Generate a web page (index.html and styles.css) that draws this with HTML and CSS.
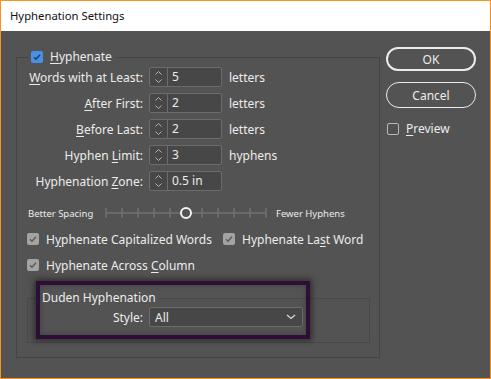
FILE: index.html
```html
<!DOCTYPE html>
<html lang="en">
<head>
<meta charset="UTF-8">
<title>Hyphenation Settings</title>
<link rel="stylesheet" href="styles.css">
</head>
<body>
    <div class="window">
        <div class="titlebar">Hyphenation Settings</div>

        <div class="content">
            <!-- Main group -->
            <fieldset class="group">
                <legend class="legend">
                    <span class="check blue"><svg width="12" height="12" viewBox="0 0 12 12"><path d="M3 6.2 L5 8.2 L9 3.8" fill="none" stroke="#233d5e" stroke-width="1.6"/></svg></span>
                    <span><u>H</u>yphenate</span>
                </legend>

                <div class="rows">
                    <label class="lbl"><u>W</u>ords with at Least:</label>
                    <div class="spin"><span class="arrows"><svg width="17" height="18" viewBox="0 0 17 18"><path d="M5.5 6.5 L8.5 3.5 L11.5 6.5 M5.5 11.5 L8.5 14.5 L11.5 11.5" fill="none" stroke="#b4b4b4" stroke-width="1"/></svg></span><span class="val">5</span></div>
                    <span class="unit">letters</span>

                    <label class="lbl"><u>A</u>fter First:</label>
                    <div class="spin"><span class="arrows"><svg width="17" height="18" viewBox="0 0 17 18"><path d="M5.5 6.5 L8.5 3.5 L11.5 6.5 M5.5 11.5 L8.5 14.5 L11.5 11.5" fill="none" stroke="#b4b4b4" stroke-width="1"/></svg></span><span class="val">2</span></div>
                    <span class="unit">letters</span>

                    <label class="lbl"><u>B</u>efore Last:</label>
                    <div class="spin"><span class="arrows"><svg width="17" height="18" viewBox="0 0 17 18"><path d="M5.5 6.5 L8.5 3.5 L11.5 6.5 M5.5 11.5 L8.5 14.5 L11.5 11.5" fill="none" stroke="#b4b4b4" stroke-width="1"/></svg></span><span class="val">2</span></div>
                    <span class="unit">letters</span>

                    <label class="lbl">Hyphen <u>L</u>imit:</label>
                    <div class="spin"><span class="arrows"><svg width="17" height="18" viewBox="0 0 17 18"><path d="M5.5 6.5 L8.5 3.5 L11.5 6.5 M5.5 11.5 L8.5 14.5 L11.5 11.5" fill="none" stroke="#b4b4b4" stroke-width="1"/></svg></span><span class="val">3</span></div>
                    <span class="unit">hyphens</span>

                    <label class="lbl">Hyphenation <u>Z</u>one:</label>
                    <div class="spin"><span class="arrows"><svg width="17" height="18" viewBox="0 0 17 18"><path d="M5.5 6.5 L8.5 3.5 L11.5 6.5 M5.5 11.5 L8.5 14.5 L11.5 11.5" fill="none" stroke="#b4b4b4" stroke-width="1"/></svg></span><span class="val">0.5 in</span></div>
                    <span class="unit"></span>
                </div>

                <!-- Spacing slider -->
                <div class="slider">
                    <span class="slider-lbl">Better Spacing</span>
                    <div class="track"><span class="thumb"></span></div>
                    <span class="slider-lbl">Fewer Hyphens</span>
                </div>

                <div class="checks">
                    <div class="opt"><span class="check grey"><svg width="12" height="12" viewBox="0 0 12 12"><path d="M3 6.2 L5 8.2 L9 3.8" fill="none" stroke="#5c5c5c" stroke-width="1.5"/></svg></span><span>H<u>y</u>phenate Capitalized Words</span></div>
                    <div class="opt"><span class="check grey"><svg width="12" height="12" viewBox="0 0 12 12"><path d="M3 6.2 L5 8.2 L9 3.8" fill="none" stroke="#5c5c5c" stroke-width="1.5"/></svg></span><span>Hyphenate La<u>s</u>t Word</span></div>
                    <div class="opt"><span class="check grey"><svg width="12" height="12" viewBox="0 0 12 12"><path d="M3 6.2 L5 8.2 L9 3.8" fill="none" stroke="#5c5c5c" stroke-width="1.5"/></svg></span><span>Hyphenate Across <u>C</u>olumn</span></div>
                </div>

                <!-- Duden group -->
                <fieldset class="duden">
                    <legend class="legend2">Duden Hyphenation</legend>
                    <div class="style-row">
                        <label class="lbl">Style:</label>
                        <div class="select">
                            <span>All</span>
                            <svg width="10" height="6" viewBox="0 0 10 6"><path d="M1 1 L5 4.5 L9 1" fill="none" stroke="#d8d8d8" stroke-width="1.3"/></svg>
                        </div>
                    </div>
                    <div class="highlight"></div>
                </fieldset>
            </fieldset>

            <!-- Buttons -->
            <div class="side">
                <button class="btn primary">OK</button>
                <button class="btn">Cancel</button>
                <div class="preview"><span class="check empty"></span><span><u>P</u>review</span></div>
            </div>
        </div>
    </div>
</body>
</html>
```

FILE: styles.css
```css
* {
    box-sizing: border-box;
}

html, body {
    margin: 0;
    padding: 0;
}

body {
    width: 491px;
    height: 379px;
    background: #535353;
    font-family: "Noto Sans", "Open Sans", sans-serif;
    font-size: 12px;
    color: #ececec;
}

u {
    text-decoration: underline;
    text-underline-offset: 2px;
}

.window {
    height: 379px;
    border: 1px solid #f7931e;
    background: #535353;
}

.titlebar {
    height: 30px;
    line-height: 30px;
    padding-left: 9px;
    background: #fff;
    color: #111;
    font-size: 11.3px;
}

.content {
    display: flex;
    gap: 6px;
    padding: 16px 0 0 15px;
}

/* Group boxes */
.group {
    position: relative;
    margin: 3px 0 0 0;
    padding: 0;
    width: 364px;
    height: 308px;
    border: 1px solid #454545;
}

.legend {
    margin-left: 11px;
    padding: 0 4px 0 3px;
    height: 14px;
    display: flex;
    align-items: center;
    gap: 7px;
    line-height: 14px;
}

.check {
    display: inline-block;
    width: 12px;
    height: 12px;
    border-radius: 2px;
    flex: none;
}

.check svg {
    display: block;
}

.check.blue {
    background: #4a8fe6;
}

.check.grey {
    background: #a3a3a3;
}

.check.empty {
    border: 1px solid #b8b8b8;
    background: #505050;
}

/* Spinner rows */
.rows {
    display: grid;
    grid-template-columns: 126px 73px auto;
    grid-auto-rows: 20px;
    column-gap: 6px;
    row-gap: 6px;
    margin-top: 3px;
    align-items: center;
}

.lbl {
    text-align: right;
    white-space: nowrap;
}

.unit {
    padding-left: 1px;
}

.spin {
    display: flex;
    height: 20px;
    border: 1px solid #6b6b6b;
    border-radius: 2px;
    background: #474747;
}

.spin .arrows {
    width: 18px;
    border-right: 1px solid #6b6b6b;
}

.spin .arrows svg {
    display: block;
}

.spin .val {
    padding-left: 4px;
    line-height: 18px;
}

/* Slider */
.slider {
    display: flex;
    align-items: center;
    height: 14px;
    margin-top: 15px;
    padding-left: 11px;
}

.slider-lbl {
    font-size: 9.5px;
    white-space: nowrap;
}

.slider-lbl:first-child {
    width: 77px;
}

.track {
    position: relative;
    width: 162px;
    height: 10px;
    margin-right: 9px;
    background:
        linear-gradient(#6a6a6a, #6a6a6a) 0 4px / 100% 2px no-repeat,
        repeating-linear-gradient(90deg, #6a6a6a 0 2px, transparent 2px 16px);
}

.thumb {
    position: absolute;
    left: 75px;
    top: -1px;
    width: 12px;
    height: 12px;
    border: 2px solid #f2f2f2;
    border-radius: 50%;
    background: #535353;
}

/* Checkbox options */
.checks {
    display: grid;
    grid-template-columns: 196px auto;
    grid-auto-rows: 14px;
    row-gap: 12px;
    margin-top: 12px;
    padding-left: 10px;
}

.opt {
    display: flex;
    align-items: center;
    gap: 7px;
    white-space: nowrap;
}

/* Duden */
.duden {
    position: relative;
    margin: 19px 0 0 10px;
    padding: 0;
    width: 343px;
    height: 52px;
    border: 1px solid #494949;
}

.legend2 {
    margin-left: 12px;
    padding: 0 2px;
    height: 14px;
    line-height: 14px;
}

.style-row {
    display: flex;
    align-items: center;
    gap: 6px;
    margin-top: 2px;
}

.style-row .lbl {
    width: 115px;
}

.select {
    display: flex;
    align-items: center;
    justify-content: space-between;
    width: 154px;
    height: 20px;
    padding: 0 6px 0 5px;
    border: 1px solid #6b6b6b;
    border-radius: 2px;
    background: #474747;
}

.highlight {
    position: absolute;
    left: 8px;
    top: -24px;
    width: 274px;
    height: 58px;
    border: 4px solid #2c0e37;
    box-shadow: 0 0 6px 2px rgba(0, 0, 0, 0.45), inset 0 0 5px rgba(0, 0, 0, 0.25);
}

/* Right side */
.side {
    display: flex;
    flex-direction: column;
    align-items: flex-start;
}

.btn {
    width: 90px;
    height: 24px;
    border: 2px solid #ececec;
    border-radius: 12px;
    background: transparent;
    color: #ececec;
    font: inherit;
    padding: 0;
}

.btn + .btn {
    height: 26px;
    margin-top: 11px;
    border-width: 1px;
    border-radius: 13px;
}

.preview {
    display: flex;
    align-items: center;
    gap: 7px;
    margin: 12px 0 0 1px;
}
```
